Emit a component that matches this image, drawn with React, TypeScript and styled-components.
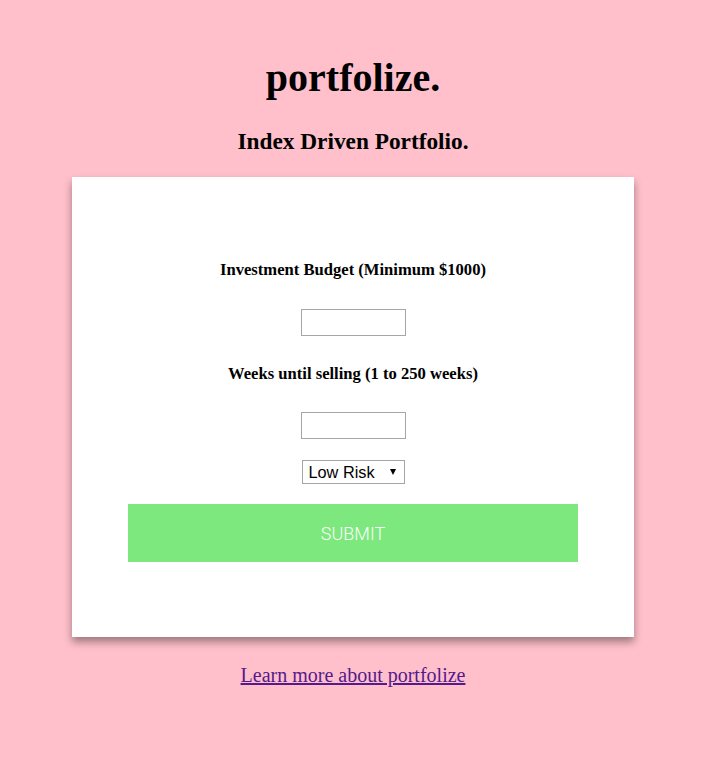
import styled, { createGlobalStyle } from "styled-components";

const GlobalStyle = createGlobalStyle`
  html, body {
    margin: 0;
    padding: 0;
    background: #ffc0cb;
  }
  body {
    font-family: "Liberation Serif", "Times New Roman", serif;
    color: #000;
  }
`;

const Page = styled.div`
  display: flex;
  flex-direction: column;
  align-items: center;
  padding-right: 8px;
`;

const Title = styled.h1`
  margin: 55px 0 0;
  font-size: 40px;
  line-height: 46px;
  font-weight: bold;
`;

const Subtitle = styled.h2`
  margin: 26px 0 0;
  font-size: 23.3px;
  line-height: 28px;
  font-weight: bold;
`;

const Card = styled.form`
  margin-top: 22px;
  width: 562px;
  height: 460px;
  box-sizing: border-box;
  padding: 84px 56px 0;
  background: #fff;
  box-shadow: 0 5px 8px rgba(0, 0, 0, 0.38);
  display: flex;
  flex-direction: column;
  align-items: center;
`;

const Label = styled.label<{ $top?: number }>`
  margin-top: ${(p) => p.$top ?? 0}px;
  font-size: 16.6px;
  line-height: 18px;
  font-weight: bold;
  white-space: nowrap;
`;

const Input = styled.input<{ $top?: number }>`
  margin-top: ${(p) => p.$top ?? 30}px;
  width: 105px;
  height: 27px;
  box-sizing: border-box;
  border: 1px solid #a6a6a6;
  padding: 2px 4px;
  font-family: "Liberation Sans", Arial, sans-serif;
  font-size: 14px;
  outline: none;
`;

const SelectWrap = styled.div`
  position: relative;
  margin-top: 21px;
  width: 103px;
  height: 24px;
`;

const Select = styled.select`
  appearance: none;
  width: 103px;
  height: 24px;
  box-sizing: border-box;
  border: 1px solid #a6a6a6;
  border-radius: 0;
  background: #fff;
  padding: 0 0 0 6px;
  font-family: "Liberation Sans", Arial, sans-serif;
  font-size: 16.3px;
  color: #000;
`;

const Arrow = styled.span`
  position: absolute;
  right: 9px;
  top: 9px;
  width: 0;
  height: 0;
  border-left: 3px solid transparent;
  border-right: 3px solid transparent;
  border-top: 6px solid #000;
  pointer-events: none;
`;

const Submit = styled.button`
  margin-top: 20px;
  width: 450px;
  height: 58px;
  border: none;
  background: #7de87e;
  color: #fbfffb;
  font-family: Roboto, "Liberation Sans", sans-serif;
  font-weight: 300;
  font-size: 18px;
  text-transform: uppercase;
  cursor: pointer;
`;

const LearnMore = styled.a`
  margin-top: 27px;
  font-size: 20px;
  line-height: 23px;
  color: #551a8b;
  text-decoration: underline;
`;

export default function App() {
  return (
    <>
      <GlobalStyle />
      <Page>
        <Title>portfolize.</Title>
        <Subtitle>Index Driven Portfolio.</Subtitle>
        <Card onSubmit={(e) => e.preventDefault()}>
          <Label>Investment Budget (Minimum $1000)</Label>
          <Input type="text" />
          <Label $top={29}>Weeks until selling (1 to 250 weeks)</Label>
          <Input type="text" $top={29} />
          <SelectWrap>
            <Select defaultValue="low">
              <option value="low">Low Risk</option>
              <option value="medium">Medium Risk</option>
              <option value="high">High Risk</option>
            </Select>
            <Arrow />
          </SelectWrap>
          <Submit type="submit">Submit</Submit>
        </Card>
        <LearnMore href="#about">Learn more about portfolize</LearnMore>
      </Page>
    </>
  );
}
